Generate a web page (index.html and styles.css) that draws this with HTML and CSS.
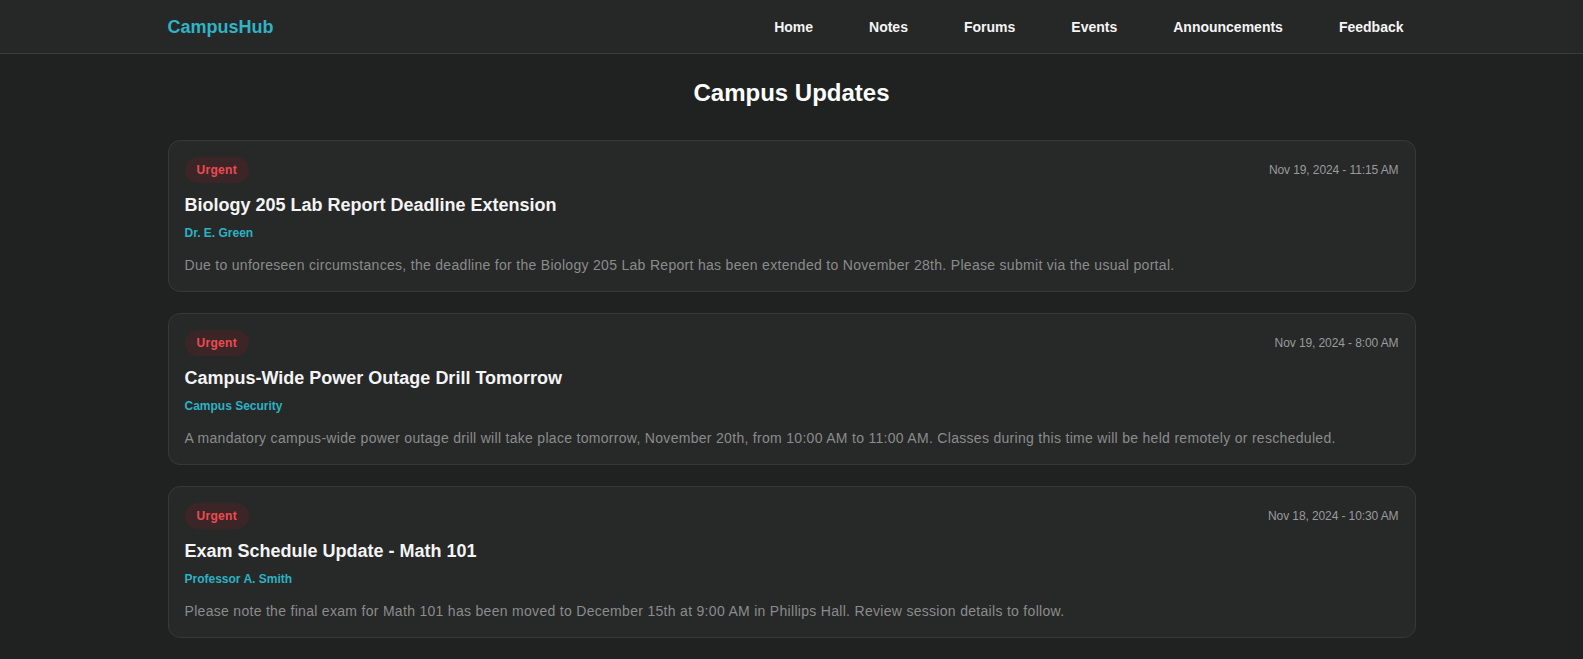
FILE: index.html
```html
<!DOCTYPE html>
<html lang="en">
<head>
<meta charset="utf-8">
<title>CampusHub - Campus Updates</title>
<link rel="stylesheet" href="styles.css">
</head>
<body>
  <header class="topbar">
    <div class="container topbar-inner">
      <a class="logo" href="#">CampusHub</a>
      <nav class="nav">
        <a href="#">Home</a>
        <a href="#">Notes</a>
        <a href="#">Forums</a>
        <a href="#">Events</a>
        <a href="#">Announcements</a>
        <a href="#">Feedback</a>
      </nav>
    </div>
  </header>

  <main class="container main">
    <h1 class="page-title">Campus Updates</h1>

    <div class="feed">
      <article class="card">
        <div class="card-head">
          <span class="badge">Urgent</span>
          <span class="date">Nov 19, 2024 - 11:15 AM</span>
        </div>
        <h2 class="card-title">Biology 205 Lab Report Deadline Extension</h2>
        <div class="author">Dr. E. Green</div>
        <p class="desc">Due to unforeseen circumstances, the deadline for the Biology 205 Lab Report has been extended to November 28th. Please submit via the usual portal.</p>
      </article>

      <article class="card">
        <div class="card-head">
          <span class="badge">Urgent</span>
          <span class="date">Nov 19, 2024 - 8:00 AM</span>
        </div>
        <h2 class="card-title">Campus-Wide Power Outage Drill Tomorrow</h2>
        <div class="author">Campus Security</div>
        <p class="desc">A mandatory campus-wide power outage drill will take place tomorrow, November 20th, from 10:00 AM to 11:00 AM. Classes during this time will be held remotely or rescheduled.</p>
      </article>

      <article class="card">
        <div class="card-head">
          <span class="badge">Urgent</span>
          <span class="date">Nov 18, 2024 - 10:30 AM</span>
        </div>
        <h2 class="card-title">Exam Schedule Update - Math 101</h2>
        <div class="author">Professor A. Smith</div>
        <p class="desc">Please note the final exam for Math 101 has been moved to December 15th at 9:00 AM in Phillips Hall. Review session details to follow.</p>
      </article>

      <article class="card">
        <div class="card-head">
          <span class="badge badge-info">Info</span>
          <span class="date">Nov 17, 2024 - 2:00 PM</span>
        </div>
        <h2 class="card-title">Library Extended Hours During Finals</h2>
        <div class="author">University Library</div>
        <p class="desc">The main library will remain open until 2:00 AM throughout the finals period.</p>
      </article>
    </div>
  </main>
</body>
</html>
```

FILE: styles.css
```css
* {
  box-sizing: border-box;
}

html, body {
  margin: 0;
  padding: 0;
}

body {
  background: #202221;
  color: #f2f2f2;
  font-family: "Liberation Sans", Arial, Helvetica, sans-serif;
}

a {
  text-decoration: none;
  color: inherit;
}

.container {
  max-width: 1280px;
  margin: 0 auto;
  padding: 0 16px;
}

.topbar {
  background: #262727;
  border-bottom: 1px solid #3b3c3c;
}

.topbar-inner {
  height: 53px;
  display: flex;
  align-items: center;
  justify-content: space-between;
}

.logo {
  color: #2fb4c5;
  font-size: 18px;
  font-weight: 700;
  line-height: 24px;
}

.nav {
  display: flex;
  gap: 32px;
}

.nav a {
  color: #f5f5f5;
  font-size: 14px;
  font-weight: 700;
  line-height: 20px;
  padding: 0 12px;
}

.main {
  padding-top: 23px;
  padding-bottom: 40px;
}

.page-title {
  margin: 0 0 31px;
  text-align: center;
  font-size: 24px;
  line-height: 32px;
  font-weight: 700;
  color: #ffffff;
}

.feed {
  display: flex;
  flex-direction: column;
  gap: 21px;
}

.card {
  background: #272828;
  border: 1px solid #373939;
  border-radius: 12px;
  padding: 16px;
}

.card-head {
  display: flex;
  align-items: center;
  justify-content: space-between;
}

.badge {
  display: inline-block;
  background: #3b2527;
  color: #ee4b51;
  font-size: 12px;
  font-weight: 700;
  line-height: 18px;
  padding: 4px 12px;
  border-radius: 999px;
  letter-spacing: 0.3px;
}

.badge-info {
  background: #1f3538;
  color: #2fb4c5;
}

.date {
  color: #9a9b9b;
  font-size: 12px;
  line-height: 16px;
  letter-spacing: -0.1px;
}

.card-title {
  margin: 8px 0 0;
  font-size: 18px;
  line-height: 28px;
  font-weight: 700;
  color: #f4f4f4;
}

.author {
  margin-top: 6px;
  color: #2ab3c4;
  font-size: 12px;
  font-weight: 700;
  line-height: 16px;
}

.desc {
  margin: 14px 0 0;
  color: #8b8c8c;
  font-size: 14px;
  line-height: 20px;
  letter-spacing: 0.3px;
}
```
